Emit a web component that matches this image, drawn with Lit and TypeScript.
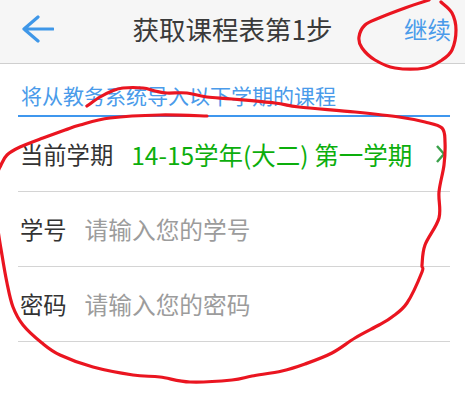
import { LitElement, html, css, svg } from "lit";
import { customElement } from "lit/decorators.js";

type Pt = [number, number];

const INK: Pt[] = [
  [87, 106], [100, 97], [112, 91], [123, 88], [143, 88], [155, 91], [167, 93], [187, 93], [207, 97], [232, 99],
  [275, 103], [299, 107], [355, 112], [399, 117], [425, 122], [442, 128], [445, 142], [444, 165], [439, 192],
  [439, 218], [425, 245], [422, 265], [422, 272], [407, 303], [392, 317], [379, 325], [355, 338], [332, 353],
  [305, 364], [282, 371], [252, 376], [232, 380], [190, 382], [160, 377], [133, 375], [93, 367], [60, 355],
  [42, 343], [23, 325], [13, 307], [7, 283], [2, 255], [-3, 220], [-3, 178], [1, 165], [7, 155], [20, 147],
  [43, 138], [65, 130], [80, 125], [110, 118], [160, 115], [207, 116],
];
const LOOP: Pt[] = [
  [441, 2], [452, 13], [456, 30], [452, 50], [442, 60], [425, 68], [395, 68], [375, 60], [362, 48], [359, 37],
  [365, 25], [379, 18], [405, 8], [429, 0],
];

function smooth(p: Pt[]): string {
  let d = `M${p[0][0]} ${p[0][1]}`;
  for (let i = 0; i < p.length - 1; i++) {
    const a = p[Math.max(i - 1, 0)];
    const b = p[i];
    const c = p[i + 1];
    const e = p[Math.min(i + 2, p.length - 1)];
    const c1x = b[0] + (c[0] - a[0]) / 6;
    const c1y = b[1] + (c[1] - a[1]) / 6;
    const c2x = c[0] - (e[0] - b[0]) / 6;
    const c2y = c[1] - (e[1] - b[1]) / 6;
    d += ` C${c1x.toFixed(1)} ${c1y.toFixed(1)} ${c2x.toFixed(1)} ${c2y.toFixed(1)} ${c[0]} ${c[1]}`;
  }
  return d;
}

@customElement("app-root")
export class AppRoot extends LitElement {
  static styles = css`
    :host {
      display: block;
      position: relative;
      width: 465px;
      height: 400px;
      overflow: hidden;
      background: #fff;
      font-family: "Noto Sans CJK SC", "Noto Sans", sans-serif;
    }
    .bar {
      height: 64px;
      box-sizing: border-box;
      background: #f6f6f6;
      border-bottom: 1px solid #cfcfcf;
      display: grid;
      grid-template-columns: 1fr auto 1fr;
      align-items: center;
      padding: 0 14px 6px 22px;
    }
    .back {
      display: block;
      width: 32px;
      height: 28px;
    }
    .title {
      font-size: 26.5px;
      color: #3a3a3a;
      line-height: 34px;
      margin-left: -8px;
    }
    .next {
      justify-self: end;
      font-size: 23.5px;
      color: #4a9bea;
      line-height: 34px;
    }
    .content {
      padding: 0 15px 0 18px;
    }
    .hint {
      height: 53px;
      box-sizing: border-box;
      border-bottom: 2px solid #3f97ee;
      padding: 16px 0 0 3px;
      font-size: 21px;
      line-height: 30px;
      color: #4a9bea;
      white-space: nowrap;
    }
    .row {
      height: 75px;
      box-sizing: border-box;
      border-bottom: 1px solid #d4d4d4;
      display: flex;
      align-items: center;
      padding: 0 0 0 2px;
      font-size: 23.3px;
      color: #333;
      white-space: nowrap;
    }
    .label {
      flex: none;
    }
    .value {
      margin-left: 18px;
      color: #0cae0c;
      font-size: 24.5px;
    }
    .place {
      margin-left: 18px;
      font-size: 23.7px;
      color: #9c9c9c;
    }
    .chev {
      margin-left: auto;
      margin-right: 4px;
      width: 11px;
      height: 20px;
      flex: none;
    }
    .ink {
      position: absolute;
      inset: 0;
      width: 465px;
      height: 400px;
      pointer-events: none;
    }
  `;

  render() {
    return html`
      <div class="bar">
        <svg class="back" viewBox="0 0 32 28">
          <path d="M16 2 L2 14 L16 26 M2 14 H31" fill="none" stroke="#3f97e8" stroke-width="3.2" stroke-linecap="round" stroke-linejoin="round" />
        </svg>
        <div class="title">获取课程表第1步</div>
        <div class="next">继续</div>
      </div>
      <div class="content">
        <div class="hint">将从教务系统导入以下学期的课程</div>
        <div class="row">
          <span class="label">当前学期</span>
          <span class="value">14-15学年(大二) 第一学期</span>
          <svg class="chev" viewBox="0 0 11 20">
            <path d="M2 2 L9 10 L2 18" fill="none" stroke="#3aa14a" stroke-width="2.4" />
          </svg>
        </div>
        <div class="row">
          <span class="label">学号</span>
          <span class="place">请输入您的学号</span>
        </div>
        <div class="row">
          <span class="label">密码</span>
          <span class="place">请输入您的密码</span>
        </div>
      </div>
      <svg class="ink" viewBox="0 0 465 400">
        ${svg`<path d=${smooth(INK)} fill="none" stroke="#ea1520" stroke-width="3.2" stroke-linejoin="round" stroke-linecap="round" />
        <path d=${smooth(LOOP)} fill="none" stroke="#ea1520" stroke-width="3.2" stroke-linejoin="round" stroke-linecap="round" />`}
      </svg>
    `;
  }
}
